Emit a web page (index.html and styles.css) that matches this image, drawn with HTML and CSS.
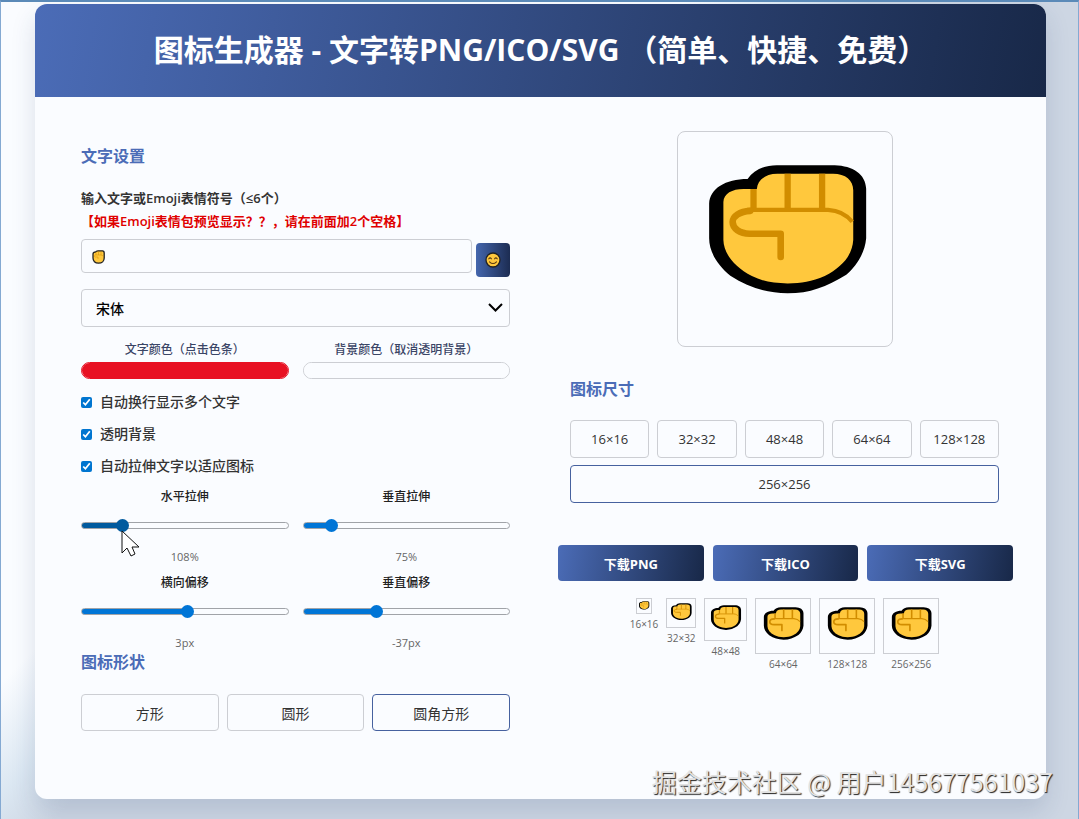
FILE: index.html
```html
<!DOCTYPE html>
<html lang="zh-CN">

<head>
    <meta charset="UTF-8">
    <meta name="viewport" content="width=device-width, initial-scale=1.0">
    <title>图标生成器</title>
    <link rel="stylesheet" href="styles.css">
</head>

<body>
    <!-- Shared fist drawing -->
    <svg class="defs" aria-hidden="true">
        <symbol id="fist" viewBox="52 34 646 646">
            <path fill="#000" d="M146 250C148 205 195 176 262 176C280 150 310 134 350 134H525C580 136 618 160 620 205V355C616 400 590 440 560 465C500 502 450 521 383 521C315 520 265 503 210 468C170 435 146 395 146 355Z" />
            <path fill="#ffc83d" d="M189 245C190 220 215 206 250 206H290C292 180 315 160 352 160H520C558 160 581 180 581 210V360C578 405 550 440 495 469C455 486 425 491 383 491C340 491 305 484 275 469C220 440 190 400 189 360Z" />
            <path fill="none" stroke="#d18d00" stroke-width="19" d="M280 206V268M383 160V268M487 160V268" />
            <path fill="none" stroke="#d18d00" stroke-width="13" d="M260 269H505C540 271 562 285 578 305" />
            <path fill="none" stroke="#d18d00" stroke-width="20" stroke-linecap="round" stroke-linejoin="round" d="M270 272C238 274 217 288 217 306C217 325 238 341 268 341H362V411" />
        </symbol>
    </svg>

    <div class="container">
        <header>
            <h1>图标生成器 - 文字转PNG/ICO/SVG （简单、快捷、免费）</h1>
        </header>

        <main class="content">
            <!-- Settings -->
            <section class="settings">
                <h2>文字设置</h2>
                <label class="text-label" for="iconText">输入文字或Emoji表情符号（≤6个）<span class="tip">【如果Emoji表情包预览显示？？，请在前面加2个空格】</span></label>
                <div class="text-row">
                    <div class="field">
                        <input type="text" id="iconText">
                        <svg class="field-emoji" viewBox="0 0 13 14" aria-hidden="true">
                            <path fill="#ffc83d" stroke="#222" stroke-width="1.3" d="M1 4C1 2.500 2 2 3.500 2C4 1 5 .8 6 .8H10.500C12 .8 12.200 2 12.200 3V8C12.200 11 10 13.200 6.500 13.200C3 13.200 1 11 1 8Z" />
                            <path fill="none" stroke="#d18d00" stroke-width=".5" d="M4 2V5M6.500 1.500V5M9 1.500V5M11.500 6L9 5H3.500C2 5.500 2 7 3.500 7H6V9" />
                        </svg>
                    </div>
                    <button class="emoji-btn" type="button" aria-label="选择表情">
                        <svg viewBox="0 0 16 16" aria-hidden="true">
                            <circle cx="8" cy="8" r="7" fill="#ffc83d" stroke="#222" stroke-width="1.300" />
                            <path fill="none" stroke="#5a3a10" stroke-width="1.100" stroke-linecap="round" d="M3.800 6.800Q5.100 5 6.400 6.800M9.600 6.800Q10.900 5 12.200 6.800M4.500 9.800Q8 13.200 11.500 9.800" />
                        </svg>
                    </button>
                </div>
                <div class="field font-field">
                    <select id="fontSelect" aria-label="字体">
                        <option>宋体</option>
                    </select>
                    <svg class="chevron" viewBox="0 0 15 9" aria-hidden="true">
                        <path fill="none" stroke="#000" stroke-width="2" d="M1 1L7.500 7.500L14 1" />
                    </svg>
                </div>

                <div class="pair colors">
                    <div>
                        <label for="textColor">文字颜色（点击色条）</label>
                        <input class="color-text" type="color" id="textColor" value="#e81123">
                    </div>
                    <div>
                        <label for="bgColor">背景颜色（取消透明背景）</label>
                        <input class="color-bg" type="color" id="bgColor" value="#fafcff">
                    </div>
                </div>

                <label class="check"><input type="checkbox" checked>自动换行显示多个文字</label>
                <label class="check"><input type="checkbox" checked>透明背景</label>
                <label class="check"><input type="checkbox" checked>自动拉伸文字以适应图标</label>

                <div class="pair sliders">
                    <div class="slider active">
                        <label for="stretchX">水平拉伸</label>
                        <input type="range" id="stretchX" min="20" max="520" value="108" style="--fill: 18%">
                        <output for="stretchX">108%</output>
                        <svg class="cursor" viewBox="0 0 19 27" aria-hidden="true">
                            <path fill="#fff" stroke="#111" d="M1 1V23L6 18L10 26L14 24L11 17H18Z" />
                        </svg>
                    </div>
                    <div class="slider">
                        <label for="stretchY">垂直拉伸</label>
                        <input type="range" id="stretchY" min="20" max="520" value="75" style="--fill: 12%">
                        <output for="stretchY">75%</output>
                    </div>
                    <div class="slider">
                        <label for="offsetX">横向偏移</label>
                        <input type="range" id="offsetX" min="-120" max="120" value="3" style="--fill: 51%">
                        <output for="offsetX">3px</output>
                    </div>
                    <div class="slider">
                        <label for="offsetY">垂直偏移</label>
                        <input type="range" id="offsetY" min="-120" max="120" value="-37" style="--fill: 35%">
                        <output for="offsetY">-37px</output>
                    </div>
                </div>

                <h2>图标形状</h2>
                <div class="options">
                    <button type="button" class="option">方形</button>
                    <button type="button" class="option">圆形</button>
                    <button type="button" class="option selected">圆角方形</button>
                </div>
            </section>

            <!-- Preview -->
            <section class="preview">
                <svg class="canvas" role="img" aria-label="预览"><use href="#fist" /></svg>
                <h2>图标尺寸</h2>
                <div class="options sizes">
                    <button type="button" class="option">16×16</button>
                    <button type="button" class="option">32×32</button>
                    <button type="button" class="option">48×48</button>
                    <button type="button" class="option">64×64</button>
                    <button type="button" class="option">128×128</button>
                    <button type="button" class="option wide selected">256×256</button>
                </div>
                <div class="downloads">
                    <button type="button">下载PNG</button>
                    <button type="button">下载ICO</button>
                    <button type="button">下载SVG</button>
                </div>
                <div class="thumbs">
                    <figure><svg class="s16"><use href="#fist" /></svg><figcaption>16×16</figcaption></figure>
                    <figure><svg class="s32"><use href="#fist" /></svg><figcaption>32×32</figcaption></figure>
                    <figure><svg class="s48"><use href="#fist" /></svg><figcaption>48×48</figcaption></figure>
                    <figure><svg class="s64"><use href="#fist" /></svg><figcaption>64×64</figcaption></figure>
                    <figure><svg class="s64"><use href="#fist" /></svg><figcaption>128×128</figcaption></figure>
                    <figure><svg class="s64"><use href="#fist" /></svg><figcaption>256×256</figcaption></figure>
                </div>
            </section>
        </main>
    </div>

    <div class="watermark">掘金技术社区 @ 用户145677561037</div>
</body>

</html>
```

FILE: styles.css
```css
* {
    box-sizing: border-box;
    margin: 0;
    padding: 0;
}

body {
    position: relative;
    min-height: 100vh;
    padding: 2px 32px 20px 34px;
    border: 1px solid #84a9d2;
    border-top: 2px solid #5b8ab8;
    border-bottom: 0;
    background: linear-gradient(135deg, #fafcff 36%, #dbe7f2 42%, #cdd6e3 46%);
    color: #333;
    font-family: "Open Sans", "Noto Sans CJK SC", sans-serif;
    font-size: 14px;
}

button,
input,
select {
    font: inherit;
    color: inherit;
}

.defs {
    display: none;
}

.container {
    border-radius: 12px;
    background: #fafcff;
    box-shadow: 0 12px 24px rgba(31, 60, 110, 0.15);
}

header {
    padding: 23px 24px 25px;
    border-radius: 12px 12px 0 0;
    background: linear-gradient(100deg, #4b6cb7, #182848);
    color: #fff;
    text-align: center;
}

h1 {
    font-size: 30px;
    line-height: 45px;
}

.content {
    display: grid;
    grid-template-columns: 1fr 1fr;
    gap: 60px;
    padding: 34px 47px 68px 46px;
}

h2 {
    font-size: 16px;
    line-height: 24px;
    color: #4b6cb7;
}

.settings {
    padding-top: 13px;
}

/* Text input */
.text-label {
    display: block;
    margin: 19px 0 6px;
    font-size: 13px;
    font-weight: 600;
    line-height: 23px;
}

.tip {
    display: block;
    color: #e00000;
}

.text-row {
    display: flex;
    gap: 4px;
    height: 38px;
}

.field {
    position: relative;
    flex: 1;
}

.field input,
.field select {
    display: block;
    width: 100%;
    height: 34px;
    padding: 0 14px;
    border: 1px solid #ccced3;
    border-radius: 4px;
    background: transparent;
}

.field select {
    height: 38px;
    appearance: none;
    color: #000;
    font-weight: 500;
}

.font-field {
    margin: 12px 0 11px;
}

.field-emoji {
    position: absolute;
    left: 11px;
    top: 11px;
    width: 13px;
    height: 14px;
}

.chevron {
    position: absolute;
    right: 7px;
    top: 14px;
    width: 15px;
    height: 9px;
    pointer-events: none;
}

.emoji-btn {
    display: flex;
    align-items: center;
    justify-content: center;
    align-self: flex-end;
    width: 34px;
    height: 34px;
    border: 0;
    border-radius: 4px;
    background: linear-gradient(90deg, #4466ad, #1c2c52);
}

.emoji-btn svg {
    width: 16px;
    height: 16px;
}

/* Colors */
.pair {
    display: grid;
    grid-template-columns: 1fr 1fr;
    gap: 4px 14px;
    text-align: center;
    font-size: 12px;
    font-weight: 500;
}

.colors {
    margin-bottom: 7px;
    color: #3a4566;
}

.colors label {
    display: block;
    line-height: 24px;
}

.colors input {
    display: block;
    width: 100%;
    height: 17px;
    border: 1px solid #e81123;
    border-radius: 9px;
    appearance: none;
    overflow: hidden;
}

.colors .color-text {
    background: #e81123;
}

.colors .color-bg {
    border-color: #ccced3;
    background: transparent;
}

.colors input::-webkit-color-swatch-wrapper {
    padding: 0;
}

.colors input::-webkit-color-swatch {
    border: 0;
}

.check {
    display: flex;
    align-items: center;
    gap: 8px;
    line-height: 32px;
    font-weight: 500;
}

.check input {
    width: 11px;
    height: 11px;
    accent-color: #0075d0;
}

/* Sliders */
.slider {
    position: relative;
}

.slider label,
.slider input,
.slider output {
    display: block;
    width: 100%;
}

.slider label {
    line-height: 30px;
    color: #222;
}

.slider input {
    --bar: #0075d6;
    height: 13px;
    margin: 7px 0 18px;
    appearance: none;
    background: transparent;
}

.slider output {
    font-size: 11px;
    font-weight: 400;
    line-height: 14px;
    color: #666;
}

.slider input::-webkit-slider-runnable-track {
    height: 7px;
    border: 1px solid #a0a3a8;
    border-radius: 4px;
    background: linear-gradient(var(--bar), var(--bar)) border-box 0 0 / var(--fill) 100% no-repeat;
}

.slider input::-webkit-slider-thumb {
    width: 13px;
    height: 13px;
    margin-top: -4px;
    border-radius: 50%;
    appearance: none;
    background: var(--bar);
}

.slider.active input {
    --bar: #005a9e;
}

.cursor {
    position: absolute;
    left: 40px;
    top: 48px;
    width: 19px;
    height: 27px;
}

/* Option buttons */
.options {
    display: grid;
    grid-template-columns: repeat(3, 1fr);
    gap: 8px;
    margin-top: 20px;
}

.option {
    height: 37px;
    border: 1px solid #ccced3;
    border-radius: 4px;
    background: transparent;
}

.option.selected {
    border-color: #46619f;
}

.sizes {
    grid-template-columns: repeat(5, 1fr);
    row-gap: 7px;
    margin-top: 19px;
}

.sizes .option {
    height: 38px;
    font-size: 13px;
}

.option.wide {
    grid-column: 1 / -1;
}

/* Preview side */
.canvas {
    display: block;
    width: 216px;
    height: 216px;
    margin: 0 auto 30px;
    border: 1px solid #ccced3;
    border-radius: 8px;
}

.downloads {
    display: grid;
    grid-template-columns: repeat(3, 1fr);
    gap: 9px;
    margin: 42px -14px 17px -12px;
}

.downloads button {
    height: 36px;
    border: 0;
    border-radius: 4px;
    background: linear-gradient(100deg, #4b6cb7, #182848);
    color: #fff;
    font-size: 13px;
    font-weight: 700;
}

.thumbs {
    display: flex;
    justify-content: center;
    gap: 8px;
}

.thumbs figure {
    display: flex;
    flex-direction: column;
    align-items: center;
}

.thumbs svg {
    border: 1px solid #ccced3;
}

.thumbs figcaption {
    font-size: 10px;
    line-height: 21px;
    color: #666;
}

.s16 {
    width: 16px;
    height: 16px;
}

.s32 {
    width: 30px;
    height: 30px;
}

.s48 {
    width: 43px;
    height: 43px;
}

.s64 {
    width: 56px;
    height: 56px;
}

.watermark {
    position: absolute;
    right: 25px;
    bottom: 20px;
    color: #e2e2e2;
    font-family: "Noto Sans CJK SC", sans-serif;
    font-size: 25px;
    line-height: 36px;
    text-shadow: 1px 1px 1px #222;
}
```
